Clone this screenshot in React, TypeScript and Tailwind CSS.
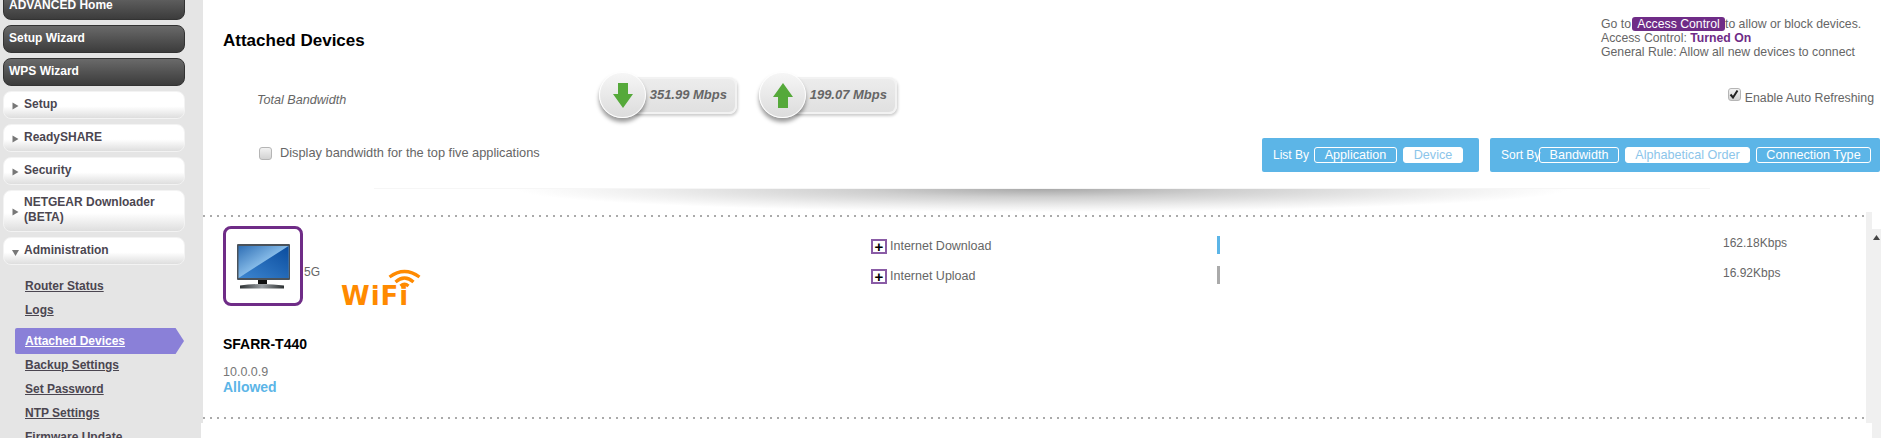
const wizardButtons = ["Setup Wizard", "WPS Wizard"];
const lowerLinks = ["Backup Settings", "Set Password", "NTP Settings", "Firmware Update"];
const menuItems = ["Setup", "ReadySHARE", "Security", "NETGEAR Downloader (BETA)"];

function MenuItem({ label, open }: { label: string; open?: boolean }) {
  return (
    <div className="mt-[5px] flex min-h-7 items-center rounded-lg border border-[#f3f3f3] bg-gradient-to-b from-white from-55% to-[#dedede] py-[4px] pl-[8px] pr-2 text-[12px] leading-[15px] font-bold text-[#4b4650]">
      <svg width="7" height="8" viewBox="0 0 7 8" className={`mr-[5px] shrink-0 ${open ? "mt-[4px]" : "mt-[1px]"}`}>
        <path d={open ? "M0 1h7L3.5 7z" : "M0.5 0.5 6.5 4 0.5 7.5z"} fill="#777" />
      </svg>
      <span className="pb-[2px]">{label}</span>
    </div>
  );
}

function SubLink({ label }: { label: string }) {
  return (
    <div className="flex h-6 items-center pb-[3px] pl-[22px] text-[12px] font-bold text-[#4b4650] underline">{label}</div>
  );
}

function Sidebar() {
  return (
    <aside className="h-[438px] w-[203px] shrink-0 overflow-hidden bg-[#e5e5e5] pl-[3px] pr-[18px]">
      <div className="mt-[-8px] flex h-7 items-center rounded-lg border border-[#333] bg-gradient-to-b from-[#6a6a6a] to-[#3c3c3c] pb-[2px] pl-[5px] text-[12px] font-bold text-white">
        ADVANCED Home
      </div>
      {wizardButtons.map((label) => (
        <div key={label} className="mt-[5px] flex h-7 items-center rounded-lg border border-[#333] bg-gradient-to-b from-[#6a6a6a] to-[#3c3c3c] pb-[2px] pl-[5px] text-[12px] font-bold text-white">
          {label}
        </div>
      ))}
      {menuItems.map((label) => (
        <MenuItem key={label} label={label} />
      ))}
      <MenuItem label="Administration" open />
      <div className="mt-[10px]">
        <SubLink label="Router Status" />
        <SubLink label="Logs" />
      </div>
      <div className="mr-[1px] ml-[12px] mt-[5px] flex h-[26px] items-center rounded-l-[2px] bg-[#8a80d8] pb-[1px] pl-[10px] text-[12px] font-bold text-white underline [clip-path:polygon(0_0,95%_0,100%_50%,95%_100%,0_100%)]">
        Attached Devices
      </div>
      {lowerLinks.map((label) => (
        <SubLink key={label} label={label} />
      ))}
    </aside>
  );
}

function BandwidthBadge({ value, up }: { value: string; up?: boolean }) {
  return (
    <div className="flex w-[138px] items-center">
      <div className="z-10 flex h-[46px] w-[47px] shrink-0 items-center justify-center rounded-full border border-white bg-gradient-to-b from-[#f6f6f6] to-[#dcdcdc] shadow-[0_4px_4px_rgba(0,0,0,0.4)]">
        <svg width="20" height="25" viewBox="0 0 20 25" className={up ? "rotate-180" : ""}>
          <path d="M5 0h10v11h5L10 25 0 11h5z" fill="#55a93a" />
        </svg>
      </div>
      <div className="ml-[-12px] flex h-[37px] flex-1 items-center justify-end rounded-r-lg border-2 border-l-0 border-[#f2f2f2] bg-gradient-to-b from-[#ececec] to-[#e0e0e0] pr-2 text-[13px] font-bold italic text-[#666] shadow-[1px_2px_3px_rgba(0,0,0,0.2)]">
        {value}
      </div>
    </div>
  );
}

function CheckBox({ checked }: { checked?: boolean }) {
  return (
    <span className="flex h-[13px] w-[13px] shrink-0 items-center justify-center rounded-[3px] border border-[#b5b5b5] bg-gradient-to-b from-[#f2f2f2] to-[#d2d2d2]">
      {checked && (
        <svg width="10" height="10" viewBox="0 0 10 10">
          <path d="M1.5 5.5 4 8.5 8.5 1.5" fill="none" stroke="#222" strokeWidth="2" />
        </svg>
      )}
    </span>
  );
}

function Pill({ label, width, active }: { label: string; width: string; active?: boolean }) {
  return (
    <span className={`flex h-4 items-center justify-center rounded-[3px] border border-white text-[12.6px] ${width} ${active ? "bg-white text-[#8cc5ea]" : "text-white"}`}>
      {label}
    </span>
  );
}

function TrafficRow({ label, value, bar }: { label: string; value: string; bar: string }) {
  return (
    <div className="flex h-[30px] items-start text-[#666]">
      <div className="flex w-[346px] items-start">
        <span className="mt-2 flex h-[15px] w-4 items-center justify-center border-2 border-[#8a5ca6] text-[15px] leading-none font-bold text-black">+</span>
        <span className="ml-[3px] mt-2 text-[12.5px] leading-[15px]">{label}</span>
      </div>
      <div className={`mt-[5px] h-[18px] w-[3px] ${bar}`} />
      <div className="ml-[503px] mt-[5px] text-[12px] leading-[14px]">{value}</div>
    </div>
  );
}

function Monitor() {
  return (
    <svg width="74" height="74" viewBox="0 0 74 74">
      <defs>
        <linearGradient id="screen" x1="0" y1="0" x2="1" y2="1">
          <stop offset="0" stopColor="#2f6fb5" />
          <stop offset="0.5" stopColor="#86bbe8" />
          <stop offset="1" stopColor="#4a92d6" />
        </linearGradient>
        <linearGradient id="screenDark" x1="0" y1="1" x2="1" y2="0">
          <stop offset="0" stopColor="#3d86d0" />
          <stop offset="1" stopColor="#0a4c9e" />
        </linearGradient>
        <linearGradient id="base" x1="0" y1="0" x2="1" y2="0">
          <stop offset="0" stopColor="#2c3032" />
          <stop offset="0.5" stopColor="#9a9fa3" />
          <stop offset="1" stopColor="#2c3032" />
        </linearGradient>
      </defs>
      <path d="M32 51h9v4h-9z" fill="#111" />
      <path d="M14 56.5Q36 53.5 58 56.5V59.5H14z" fill="url(#base)" />
      <rect x="11" y="15" width="53" height="36" rx="1" fill="#4a525a" />
      <rect x="12.5" y="17" width="50" height="32" fill="url(#screen)" />
      <path d="M62.5 17V49H12.5z" fill="url(#screenDark)" />
    </svg>
  );
}

function WifiLogo() {
  return (
    <div className="relative ml-[21px] mt-[43px] h-[37px] w-20">
      <svg width="80" height="22" viewBox="0 0 80 22" className="absolute left-0 top-0">
        <g fill="none" stroke="#ff8a00" strokeWidth="3.2">
          <path d="M48.5 8Q63.5 -3 78.5 8" />
          <path d="M54.5 13Q63.5 5 72.5 13" />
          <path d="M59.5 17Q63.5 13.5 67.5 17" />
        </g>
      </svg>
      <div className="pt-[18px] font-['DejaVu_Sans',sans-serif] text-[26px] leading-[19px] font-bold tracking-[1px] text-[#ff8a00]">WiFi</div>
    </div>
  );
}

const dots = "h-[2px] bg-[repeating-linear-gradient(90deg,#aaa_0,#aaa_2px,transparent_2px,transparent_7px)]";

function DeviceCard() {
  return (
    <div className="mt-[3px] flex h-[208px] flex-col">
      <div className={dots} />
      <div className="flex flex-1">
        <div className="w-[668px] pl-5 pt-[9px]">
          <div className="flex items-start">
            <div className="flex h-20 w-20 items-center justify-center rounded-lg border-[3px] border-[#6f2c87]">
              <Monitor />
            </div>
            <span className="ml-[1px] mt-[39px] text-[12px] leading-[14px] text-[#666]">5G</span>
            <WifiLogo />
          </div>
          <div className="mt-[30px] text-[14px] leading-4 font-bold text-black">SFARR-T440</div>
          <div className="mt-[13px] text-[12.5px] leading-[14px] text-[#777]">10.0.0.9</div>
          <div className="text-[14px] leading-4 font-bold text-[#5cb5e7]">Allowed</div>
        </div>
        <div className="pt-[14px]">
          <TrafficRow label="Internet Download" value="162.18Kbps" bar="bg-[#5cb5e7]" />
          <TrafficRow label="Internet Upload" value="16.92Kbps" bar="bg-[#aaa]" />
        </div>
      </div>
      <div className={`${dots} mb-[4px]`} />
    </div>
  );
}

export default function App() {
  return (
    <div className="flex h-[438px] w-[1881px] overflow-hidden bg-white font-['Liberation_Sans',Arial,sans-serif]">
      <Sidebar />
      <main className="min-w-0 flex-1">
        <div className="flex h-[72px] items-start justify-between pl-5 pr-[17px] pt-[17px]">
          <h1 className="mt-[14px] text-[17px] leading-5 font-bold text-black">Attached Devices</h1>
          <div className="w-[263px] whitespace-nowrap text-[12.25px] leading-[14px] text-[#666]">
            <div className="flex">
              <span className="w-[31px]">Go to</span>
              <span className="w-[93px] rounded-[3px] bg-[#6f2c87] text-center text-white">Access Control</span>
              <span>to allow or block devices.</span>
            </div>
            <div>
              Access Control: <b className="text-[#6f2c87]">Turned On</b>
            </div>
            <div>General Rule: Allow all new devices to connect</div>
          </div>
        </div>

        <div className="flex h-[46px] items-center pl-[54px] pr-[7px]">
          <span className="mt-[10px] w-[342px] text-[12.6px] italic text-[#666]">Total Bandwidth</span>
          <div className="flex gap-[22px]">
            <BandwidthBadge value="351.99 Mbps" />
            <BandwidthBadge value="199.07 Mbps" up />
          </div>
          <label className="ml-auto mt-[5px] flex items-start gap-[4px] text-[12.3px] leading-[14px] text-[#666]">
            <span className="mt-[-3px]">
              <CheckBox checked />
            </span>
            Enable Auto Refreshing
          </label>
        </div>

        <div className="mt-5 flex h-[34px] items-center pl-14 pr-[1px]">
          <label className="mt-[-4px] flex items-center gap-2 text-[12.8px] text-[#666]">
            <CheckBox />
            Display bandwidth for the top five applications
          </label>
          <div className="ml-auto flex h-[34px] w-[217px] items-center rounded-[2px] bg-[#5cb5e7] pl-[11px] text-[12px] text-white">
            <span className="w-[41px] whitespace-nowrap">List By</span>
            <div className="flex gap-[6px]">
              <Pill label="Application" width="w-[83px]" />
              <Pill label="Device" width="w-[60px]" active />
            </div>
          </div>
          <div className="ml-[11px] flex h-[34px] w-[390px] items-center rounded-[2px] bg-[#5cb5e7] pl-[11px] text-[12px] text-white">
            <span className="w-[38px] whitespace-nowrap">Sort By</span>
            <div className="flex gap-[6px]">
              <Pill label="Bandwidth" width="w-[80px]" />
              <Pill label="Alphabetical Order" width="w-[125px]" active />
              <Pill label="Connection Type" width="w-[115px]" />
            </div>
          </div>
        </div>

        {/* drop shadow under the panel */}
        <div className="ml-[171px] mt-4 h-6 w-[1336px] border-t border-[#f6f6f6]">
          <div className="mx-[141px] h-[23px] bg-[radial-gradient(ellipse_50%_100%_at_50%_0%,#a8a8a8_0%,#cfcfcf_35%,#eeeeee_75%,#fff_100%)]" />
        </div>

        <div className="flex items-start">
          <div className="min-w-0 flex-1">
            <DeviceCard />
            <div className="relative ml-[-2px] h-[15px] bg-white" />
          </div>
          <div className="h-[211px] w-[6px] bg-[#f0f0f0]" />
          <div className="mt-[17px] flex h-[209px] w-[9px] justify-center bg-[#f0f0f0] pt-[6px]">
            <svg width="7" height="5" viewBox="0 0 7 5">
              <path d="M3.5 0 7 5H0z" fill="#444" />
            </svg>
          </div>
        </div>
      </main>
    </div>
  );
}
